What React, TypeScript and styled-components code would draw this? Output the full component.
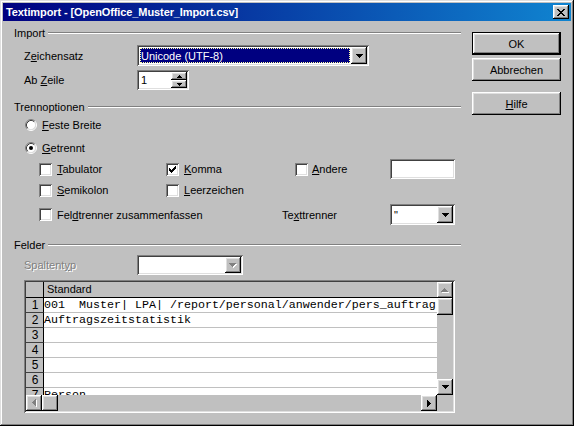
import React from "react";
import styled, { createGlobalStyle, css } from "styled-components";

const FACE = "#c0c0c0";

const Global = createGlobalStyle`
  html, body { margin: 0; padding: 0; background: ${FACE}; }
  body { font-family: "Liberation Sans", Arial, sans-serif; font-size: 11px; color: #000; }
  * { box-sizing: border-box; }
`;

const raised = css`
  background: ${FACE};
  box-shadow: inset -1px -1px #000, inset 1px 1px #fff, inset -2px -2px #808080, inset 2px 2px #dfdfdf;
`;

const sunken = css`
  box-shadow: inset 1px 1px #808080, inset -1px -1px #fff, inset 2px 2px #404040, inset -2px -2px #dfdfdf;
`;

const Window = styled.div`
  width: 574px;
  height: 426px;
  padding: 3px;
  background: ${FACE};
  box-shadow: inset -1px -1px #000, inset 1px 1px #dfdfdf, inset -2px -2px #808080, inset 2px 2px #fff;
  display: flex;
  flex-direction: column;
`;

const TitleBar = styled.div`
  height: 18px;
  background: linear-gradient(to right, #000080, #1084d0);
  display: flex;
  align-items: center;
  justify-content: space-between;
  padding: 0 2px 0 3px;
`;

const TitleText = styled.span`
  color: #fff;
  font-weight: bold;
  font-size: 11px;
  letter-spacing: -0.1px;
  white-space: nowrap;
`;

const CloseButton = styled.div`
  ${raised};
  width: 16px;
  height: 14px;
  display: flex;
  align-items: center;
  justify-content: center;
  padding-right: 1px;
`;

const Body = styled.div`
  flex: 1;
  display: flex;
`;

const Form = styled.div`
  width: 458px;
  padding-top: 5px;
  display: flex;
  flex-direction: column;
`;

const ButtonColumn = styled.div`
  margin-left: 11px;
  width: 89px;
  padding-top: 11px;
  display: flex;
  flex-direction: column;
`;

const PushButton = styled.div<{ $default?: boolean; $mt?: number }>`
  height: 23px;
  margin-top: ${(p) => p.$mt ?? 0}px;
  display: flex;
  align-items: center;
  justify-content: center;
  background: ${FACE};
  ${(p) =>
    p.$default
      ? css`
          box-shadow: inset 0 0 0 1px #000, inset -2px -2px #000, inset 2px 2px #fff, inset -3px -3px #808080,
            inset 3px 3px #dfdfdf;
        `
      : css`
          box-shadow: inset -1px -1px #000, inset 1px 1px #fff, inset -2px -2px #808080, inset 2px 2px #dfdfdf;
        `}
`;

const SectionHeader = styled.div<{ $mt?: number }>`
  height: 14px;
  margin-top: ${(p) => p.$mt ?? 0}px;
  padding-left: 11px;
  display: flex;
  align-items: center;
  gap: 3px;
`;

const HeaderLine = styled.div`
  flex: 1;
  height: 2px;
  border-top: 1px solid #808080;
  border-bottom: 1px solid #fff;
`;

const Row = styled.div<{ $mt: number; $h: number; $pl: number }>`
  height: ${(p) => p.$h}px;
  margin-top: ${(p) => p.$mt}px;
  padding-left: ${(p) => p.$pl}px;
  display: flex;
  align-items: center;
`;

const GridRow = styled.div<{ $mt: number; $h: number; $cols: string }>`
  height: ${(p) => p.$h}px;
  margin-top: ${(p) => p.$mt}px;
  padding-left: 36px;
  display: grid;
  grid-template-columns: ${(p) => p.$cols};
  align-items: center;
`;

const FieldLabel = styled.span<{ $disabled?: boolean }>`
  width: 113px;
  flex: none;
  ${(p) =>
    p.$disabled &&
    css`
      color: #808080;
      text-shadow: 1px 1px #fff;
    `}
`;

const U = styled.span`
  text-decoration: underline;
  text-underline-offset: 1px;
`;

const Combo = styled.div<{ $w: number; $h: number }>`
  ${sunken};
  background: #fff;
  width: ${(p) => p.$w}px;
  height: ${(p) => p.$h}px;
  padding: 2px;
  display: flex;
`;

const ComboValue = styled.div<{ $selected?: boolean }>`
  flex: 1;
  display: flex;
  align-items: center;
  padding-left: 2px;
  white-space: nowrap;
  overflow: hidden;
  ${(p) =>
    p.$selected &&
    css`
      margin: 1px;
      padding-left: 1px;
      background: #000080;
      color: #fff;
      outline: 1px dotted #ffffa0;
      outline-offset: -1px;
    `}
`;

const ArrowButton = styled.div<{ $w?: number; $h?: number }>`
  ${raised};
  width: ${(p) => p.$w ?? 16}px;
  height: ${(p) => (p.$h ? `${p.$h}px` : "auto")};
  flex: none;
  display: flex;
  align-items: center;
  justify-content: center;
`;

const Spin = styled.div`
  ${sunken};
  background: #fff;
  width: 52px;
  height: 20px;
  padding: 2px;
  display: flex;
`;

const SpinValue = styled.div`
  flex: 1;
  display: flex;
  align-items: center;
  padding-left: 2px;
`;

const SpinButtons = styled.div`
  width: 16px;
  display: flex;
  flex-direction: column;
`;

const SpinButton = styled.div`
  ${raised};
  flex: 1;
  display: flex;
  align-items: center;
  justify-content: center;
`;

const TextField = styled.div<{ $w: number; $h: number }>`
  ${sunken};
  background: #fff;
  width: ${(p) => p.$w}px;
  height: ${(p) => p.$h}px;
`;

const Option = styled.label<{ $gap?: number }>`
  display: flex;
  align-items: center;
  gap: ${(p) => p.$gap ?? 5}px;
  white-space: nowrap;
`;

const CheckBox = styled.span`
  ${sunken};
  background: #fff;
  width: 13px;
  height: 13px;
  flex: none;
  display: flex;
  align-items: center;
  justify-content: center;
`;

const TableFrame = styled.div`
  ${sunken};
  background: ${FACE};
  margin-top: 5px;
  margin-left: 21px;
  width: 431px;
  height: 133px;
  padding: 2px;
  display: grid;
  grid-template-columns: 411px 16px;
  grid-template-rows: 113px 16px;
`;

const DataArea = styled.div`
  background: #fff;
  overflow: hidden;
  display: flex;
  flex-direction: column;
`;

const TableRow = styled.div<{ $header?: boolean }>`
  height: ${(p) => (p.$header ? 16 : 15)}px;
  flex: none;
  display: flex;
  ${(p) =>
    p.$header &&
    css`
      background: ${FACE};
      border-bottom: 1px solid #000;
    `}
`;

const RowNum = styled.div<{ $header?: boolean }>`
  width: 18px;
  flex: none;
  background: ${FACE};
  border-right: 1px solid #000;
  ${(p) => !p.$header && "border-bottom: 1px solid #404040;"}
  font-size: 12px;
  line-height: 14px;
  text-align: center;
  padding-left: 1px;
`;

const HeaderCell = styled.div`
  flex: 1;
  padding-left: 3px;
  line-height: 15px;
`;

const Cell = styled.div`
  flex: 1;
  border-bottom: 1px solid #c0c0c0;
  font-family: "Liberation Mono", "Courier New", monospace;
  font-size: 11.67px;
  line-height: 14px;
  white-space: pre;
  overflow: hidden;
`;

const VScroll = styled.div`
  background: ${FACE};
  display: flex;
  flex-direction: column;
`;

const HScroll = styled.div`
  background: ${FACE};
  display: flex;
`;

const ScrollBtn = styled.div<{ $h?: number }>`
  ${raised};
  width: 16px;
  height: ${(p) => p.$h ?? 16}px;
  flex: none;
  display: flex;
  align-items: center;
  justify-content: center;
`;

const Track = styled.div`
  flex: 1;
`;

const Corner = styled.div`
  background: ${FACE};
`;

type Dir = "up" | "down" | "left" | "right";

const Arrow: React.FC<{ dir: Dir; n?: number; disabled?: boolean }> = ({ dir, n = 4, disabled }) => {
  const rects = (color: string, off: number) =>
    Array.from({ length: n }, (_, i) => {
      let x = 0, y = 0, w = 1, h = 1;
      if (dir === "up") { y = i; x = n - 1 - i; w = 2 * i + 1; }
      if (dir === "down") { y = i; x = i; w = 2 * (n - 1 - i) + 1; }
      if (dir === "left") { x = i; y = n - 1 - i; h = 2 * i + 1; }
      if (dir === "right") { x = i; y = i; h = 2 * (n - 1 - i) + 1; }
      return <rect key={color + i} x={x + off} y={y + off} width={w} height={h} fill={color} />;
    });
  const horiz = dir === "up" || dir === "down";
  const W = (horiz ? 2 * n - 1 : n) + (disabled ? 1 : 0);
  const H = (horiz ? n : 2 * n - 1) + (disabled ? 1 : 0);
  return (
    <svg width={W} height={H} shapeRendering="crispEdges">
      {disabled ? [...rects("#fff", 1), ...rects("#808080", 0)] : rects("#000", 0)}
    </svg>
  );
};

const CloseGlyph = () => {
  const px: [number, number, number][] = [
    [0, 0, 2], [6, 0, 2],
    [1, 1, 2], [5, 1, 2],
    [2, 2, 4],
    [3, 3, 2],
    [2, 4, 4],
    [1, 5, 2], [5, 5, 2],
    [0, 6, 2], [6, 6, 2],
  ];
  return (
    <svg width={8} height={7} shapeRendering="crispEdges">
      {px.map(([x, y, w], i) => (
        <rect key={i} x={x} y={y} width={w} height={1} fill="#000" />
      ))}
    </svg>
  );
};

const CheckGlyph = () => {
  const px: [number, number, number][] = [
    [6, 0, 1],
    [5, 1, 2],
    [0, 2, 1], [4, 2, 3],
    [0, 3, 2], [3, 3, 3],
    [0, 4, 5],
    [1, 5, 3],
    [2, 6, 1],
  ];
  return (
    <svg width={7} height={7} shapeRendering="crispEdges">
      {px.map(([x, y, w], i) => (
        <rect key={i} x={x} y={y} width={w} height={1} fill="#000" />
      ))}
    </svg>
  );
};

const Radio: React.FC<{ checked?: boolean }> = ({ checked }) => (
  <svg width={12} height={12}>
    <circle cx={6} cy={6} r={4.5} fill="#fff" />
    <path d="M2.11 9.89 A5.5 5.5 0 0 1 9.89 2.11" stroke="#808080" fill="none" />
    <path d="M9.89 2.11 A5.5 5.5 0 0 1 2.11 9.89" stroke="#fff" fill="none" />
    <path d="M2.82 9.18 A4.5 4.5 0 0 1 9.18 2.82" stroke="#404040" fill="none" />
    <path d="M9.18 2.82 A4.5 4.5 0 0 1 2.82 9.18" stroke="#dfdfdf" fill="none" />
    {checked && <circle cx={6} cy={6} r={2} fill="#000" />}
  </svg>
);

const Check: React.FC<{ checked?: boolean; children: React.ReactNode; gap?: number }> = ({ checked, children, gap }) => (
  <Option $gap={gap}>
    <CheckBox>{checked && <CheckGlyph />}</CheckBox>
    <span>{children}</span>
  </Option>
);

const rows: string[] = [
  "001  Muster| LPA| /report/personal/anwender/pers_auftrag",
  "Auftragszeitstatistik",
  "",
  "",
  "",
  "",
  "Person",
];

export default function App() {
  return (
    <>
      <Global />
      <Window>
        <TitleBar>
          <TitleText>Textimport - [OpenOffice_Muster_Import.csv]</TitleText>
          <CloseButton>
            <CloseGlyph />
          </CloseButton>
        </TitleBar>
        <Body>
          <Form>
            <SectionHeader>
              <span>Import</span>
              <HeaderLine />
            </SectionHeader>
            <Row $mt={5} $h={21} $pl={21}>
              <FieldLabel>
                Z<U>e</U>ichensatz
              </FieldLabel>
              <Combo $w={232} $h={21}>
                <ComboValue $selected>Unicode (UTF-8)</ComboValue>
                <ArrowButton>
                  <Arrow dir="down" />
                </ArrowButton>
              </Combo>
            </Row>
            <Row $mt={4} $h={20} $pl={21}>
              <FieldLabel>
                Ab <U>Z</U>eile
              </FieldLabel>
              <Spin>
                <SpinValue>1</SpinValue>
                <SpinButtons>
                  <SpinButton>
                    <Arrow dir="up" n={3} />
                  </SpinButton>
                  <SpinButton>
                    <Arrow dir="down" n={3} />
                  </SpinButton>
                </SpinButtons>
              </Spin>
            </Row>

            <SectionHeader $mt={10}>
              <span>Trennoptionen</span>
              <HeaderLine />
            </SectionHeader>
            <Row $mt={3} $h={16} $pl={22}>
              <Option>
                <Radio />
                <span>
                  <U>F</U>este Breite
                </span>
              </Option>
            </Row>
            <Row $mt={7} $h={16} $pl={22}>
              <Option>
                <Radio checked />
                <span>
                  <U>G</U>etrennt
                </span>
              </Option>
            </Row>
            <GridRow $mt={3} $h={20} $cols="127px 129px 95px 65px">
              <Check>
                <U>T</U>abulator
              </Check>
              <Check checked>
                <U>K</U>omma
              </Check>
              <Check gap={4}>
                <U>A</U>ndere
              </Check>
              <TextField $w={65} $h={20} />
            </GridRow>
            <GridRow $mt={3} $h={16} $cols="127px 129px">
              <Check>
                <U>S</U>emikolon
              </Check>
              <Check>
                <U>L</U>eerzeichen
              </Check>
            </GridRow>
            <GridRow $mt={6} $h={21} $cols="243px 108px 65px">
              <Check>
                Fel<U>d</U>trenner zusammenfassen
              </Check>
              <span>
                Te<U>x</U>ttrenner
              </span>
              <Combo $w={65} $h={21}>
                <ComboValue>"</ComboValue>
                <ArrowButton>
                  <Arrow dir="down" />
                </ArrowButton>
              </Combo>
            </GridRow>

            <SectionHeader $mt={13}>
              <span>Felder</span>
              <HeaderLine />
            </SectionHeader>
            <Row $mt={3} $h={20} $pl={21}>
              <FieldLabel $disabled>
                Spaltent<U>y</U>p
              </FieldLabel>
              <Combo $w={106} $h={20}>
                <ComboValue />
                <ArrowButton>
                  <Arrow dir="down" disabled />
                </ArrowButton>
              </Combo>
            </Row>
            <TableFrame>
              <DataArea>
                <TableRow $header>
                  <RowNum $header />
                  <HeaderCell>Standard</HeaderCell>
                </TableRow>
                {rows.map((r, i) => (
                  <TableRow key={i}>
                    <RowNum>{i + 1}</RowNum>
                    <Cell>{r}</Cell>
                  </TableRow>
                ))}
              </DataArea>
              <VScroll>
                <ScrollBtn>
                  <Arrow dir="up" disabled />
                </ScrollBtn>
                <ScrollBtn $h={17} />
                <Track />
                <ScrollBtn>
                  <Arrow dir="down" />
                </ScrollBtn>
              </VScroll>
              <HScroll>
                <ScrollBtn>
                  <Arrow dir="left" disabled />
                </ScrollBtn>
                <ScrollBtn />
                <Track />
                <ScrollBtn>
                  <Arrow dir="right" />
                </ScrollBtn>
              </HScroll>
              <Corner />
            </TableFrame>
          </Form>
          <ButtonColumn>
            <PushButton $default>OK</PushButton>
            <PushButton $mt={3}>Abbrechen</PushButton>
            <PushButton $mt={11}>
              <U>H</U>ilfe
            </PushButton>
          </ButtonColumn>
        </Body>
      </Window>
    </>
  );
}
